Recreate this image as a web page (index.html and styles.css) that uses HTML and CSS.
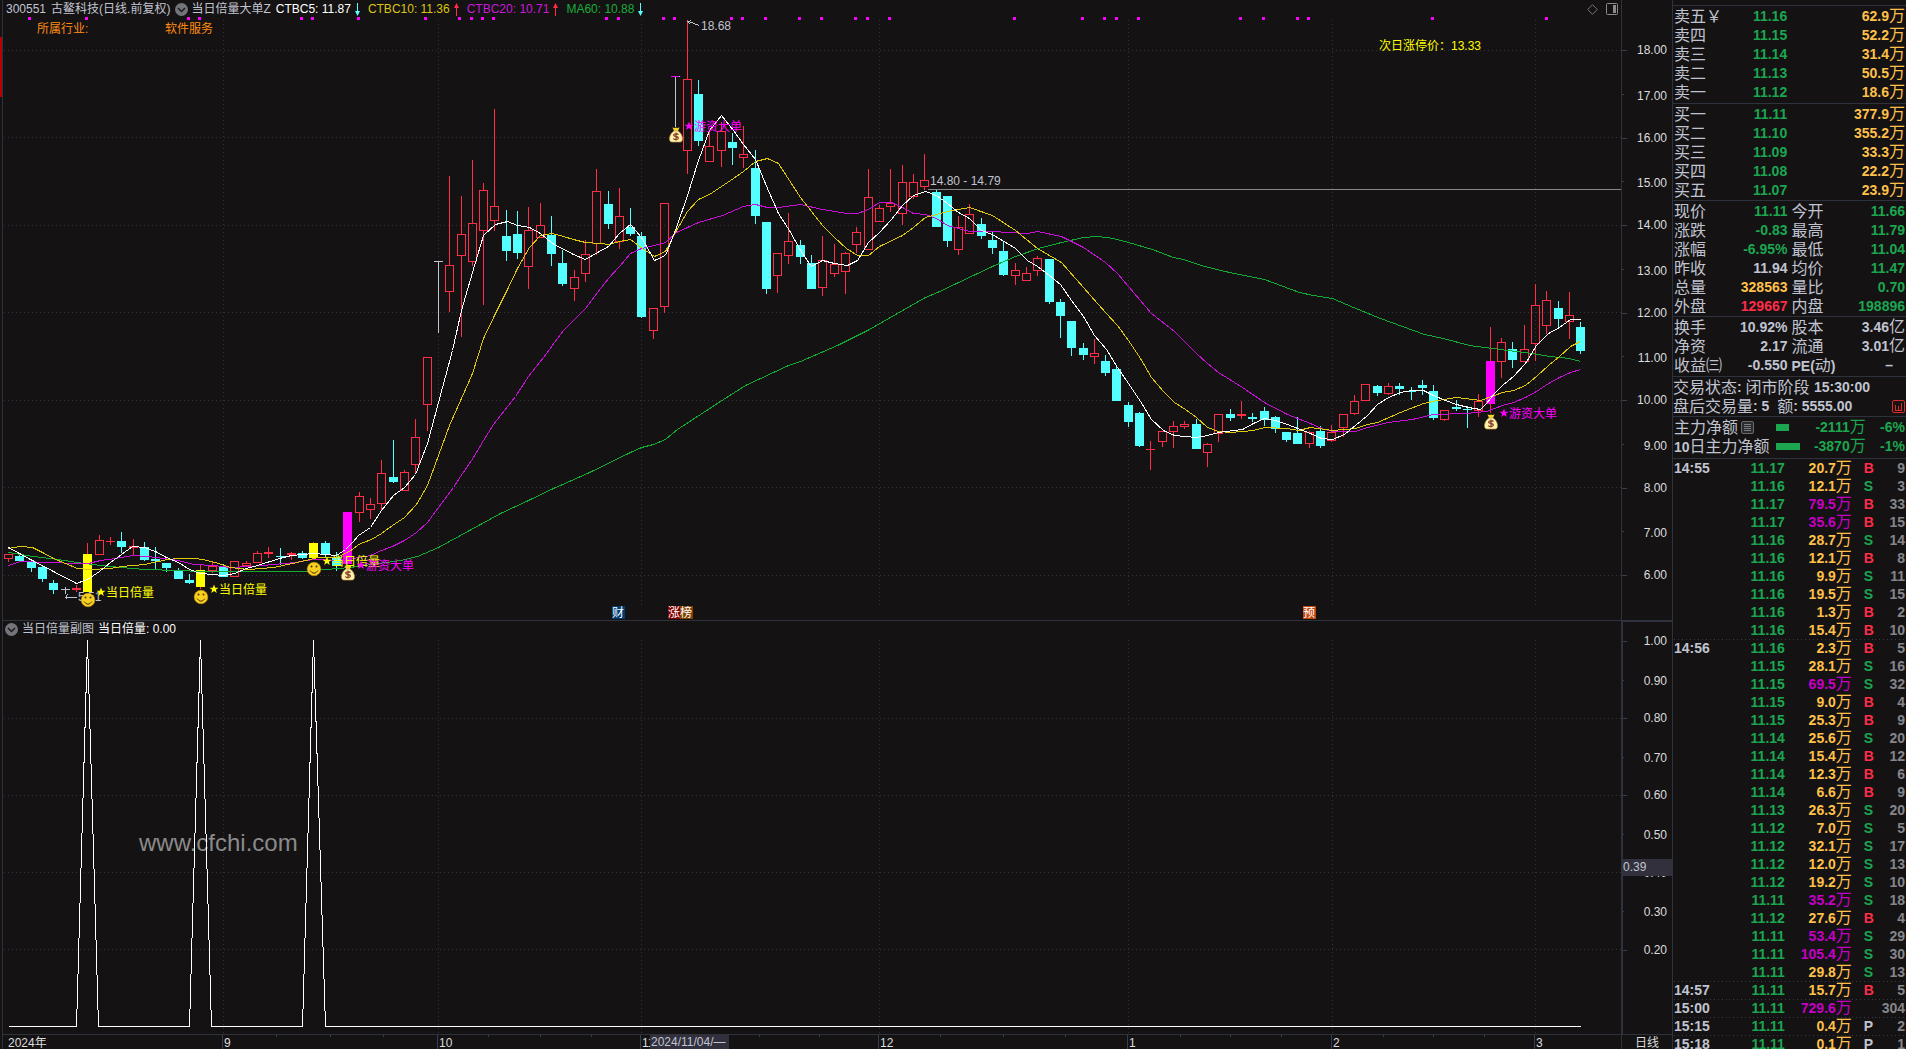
FILE: index.html
```html
<!DOCTYPE html>
<html lang="zh-CN">
<head>
<meta charset="utf-8">
<title>300551 古鳌科技</title>
<link rel="stylesheet" href="styles.css">
</head>
<body>
<div class="edge"><div class="edge-mark"></div></div>

<main class="charts">
  <section class="pane">
    <header class="pane-head">
      <span>300551</span>
      <span>古鳌科技(日线.前复权)</span>
      <button class="drop" type="button" aria-label="选择周期"><svg width="13" height="13" viewBox="0 0 13 13"><circle cx="6.500" cy="6.500" r="6.500" fill="#74757a"/><path d="M3 5l3.500 3.500L10 5" fill="none" stroke="#1b1a1c" stroke-width="1.500"/></svg></button>
      <span class="formula">当日倍量大单Z</span>
      <span class="ind white">CTBC5: 11.87<svg width="5" height="13"><path d="M2.500 0v9" stroke="#54ffff"/><path d="M0 8h5l-2.500 5z" fill="#54ffff"/></svg></span>
      <span class="ind gold">CTBC10: 11.36<svg width="5" height="13"><path d="M2.500 4v9" stroke="#ff2d48"/><path d="M0 5h5L2.500 0z" fill="#ff2d48"/></svg></span>
      <span class="ind violet">CTBC20: 10.71<svg width="5" height="13"><path d="M2.500 4v9" stroke="#ff2d48"/><path d="M0 5h5L2.500 0z" fill="#ff2d48"/></svg></span>
      <span class="ind leaf">MA60: 10.88<svg width="5" height="13"><path d="M2.500 0v9" stroke="#54ffff"/><path d="M0 8h5l-2.500 5z" fill="#54ffff"/></svg></span>
      <span class="tools">
        <button class="drop" type="button" aria-label="标记"><svg width="11" height="11" viewBox="0 0 11 11"><path d="M5.500 .7l4.800 4.800-4.800 4.800L.7 5.500z" fill="none" stroke="#777"/></svg></button>
        <button class="drop" type="button" aria-label="侧栏"><svg width="12" height="12" viewBox="0 0 12 12"><rect x=".5" y=".5" width="11" height="11" rx="1" fill="none" stroke="#8a8a8a"/><path d="M7 2h3v8H7z" fill="#8a8a8a"/></svg></button>
      </span>
    </header>
    <svg class="plot" id="price"></svg>
  </section>
  <div class="axis"><svg class="plot" id="price-axis"></svg></div>

  <section class="pane pane-sub">
    <header class="pane-head">
      <button class="drop" type="button" aria-label="选择指标"><svg width="13" height="13" viewBox="0 0 13 13"><circle cx="6.500" cy="6.500" r="6.500" fill="#74757a"/><path d="M3 5l3.500 3.500L10 5" fill="none" stroke="#1b1a1c" stroke-width="1.500"/></svg></button>
      <span>当日倍量副图</span>
      <span class="white">当日倍量: 0.00</span>
    </header>
    <svg class="plot" id="signal"></svg>
  </section>
  <div class="axis axis-sub"><svg class="plot" id="signal-axis"></svg></div>

  <div class="dates"><svg class="plot" id="dates"></svg></div>
  <div class="period">日线</div>
</main>

<aside class="quote">
  <table class="book">
    <colgroup><col class="c-side"><col class="c-price"><col></colgroup>
    <tbody>
      <tr><th>卖五￥</th><td class="g">11.16</td><td class="o">62.9<i>万</i></td></tr>
      <tr><th>卖四</th><td class="g">11.15</td><td class="o">52.2<i>万</i></td></tr>
      <tr><th>卖三</th><td class="g">11.14</td><td class="o">31.4<i>万</i></td></tr>
      <tr><th>卖二</th><td class="g">11.13</td><td class="o">50.5<i>万</i></td></tr>
      <tr><th>卖一</th><td class="g">11.12</td><td class="o">18.6<i>万</i></td></tr>
    </tbody>
  </table>
  <table class="book">
    <colgroup><col class="c-side"><col class="c-price"><col></colgroup>
    <tbody>
      <tr><th>买一</th><td class="g">11.11</td><td class="o">377.9<i>万</i></td></tr>
      <tr><th>买二</th><td class="g">11.10</td><td class="o">355.2<i>万</i></td></tr>
      <tr><th>买三</th><td class="g">11.09</td><td class="o">33.3<i>万</i></td></tr>
      <tr><th>买四</th><td class="g">11.08</td><td class="o">22.2<i>万</i></td></tr>
      <tr><th>买五</th><td class="g">11.07</td><td class="o">23.9<i>万</i></td></tr>
    </tbody>
  </table>
  <dl class="stats">
    <div><dt>现价</dt><dd class="g">11.11</dd></div><div><dt>今开</dt><dd class="g">11.66</dd></div>
    <div><dt>涨跌</dt><dd class="g">-0.83</dd></div><div><dt>最高</dt><dd class="g">11.79</dd></div>
    <div><dt>涨幅</dt><dd class="g">-6.95%</dd></div><div><dt>最低</dt><dd class="g">11.04</dd></div>
    <div><dt>昨收</dt><dd>11.94</dd></div><div><dt>均价</dt><dd class="g">11.47</dd></div>
    <div><dt>总量</dt><dd class="o">328563</dd></div><div><dt>量比</dt><dd class="g">0.70</dd></div>
    <div><dt>外盘</dt><dd class="r">129667</dd></div><div><dt>内盘</dt><dd class="g">198896</dd></div>
  </dl>
  <dl class="stats stats-pad">
    <div><dt>换手</dt><dd>10.92%</dd></div><div><dt>股本</dt><dd>3.46<i>亿</i></dd></div>
    <div><dt>净资</dt><dd>2.17</dd></div><div><dt>流通</dt><dd>3.01<i>亿</i></dd></div>
    <div><dt>收益㈢</dt><dd>-0.550</dd></div><div><dt><b>PE(</b>动<b>)</b></dt><dd class="none">–</dd></div>
  </dl>
  <div class="status">
    <p>交易状态<b>: </b>闭市阶段 <b>15:30:00</b></p>
    <p>盘后交易量<b>: 5  </b>额<b>: 5555.00</b>
      <button class="drop" type="button" aria-label="盘后明细"><svg width="13" height="13" viewBox="0 0 13 13"><rect x=".5" y=".5" width="12" height="12" rx="1.500" fill="none" stroke="#e02a2a"/><path d="M3.500 5v5M6.500 6v4M9.500 3v7M3 10.500h7" stroke="#e02a2a" fill="none"/></svg></button></p>
  </div>
  <table class="flow">
    <colgroup><col class="f-name"><col class="f-bar"><col class="f-sum"><col></colgroup>
    <tbody>
      <tr><th>主力净额<svg class="doc" width="13" height="13" viewBox="0 0 13 13"><rect x=".5" y=".5" width="12" height="12" rx="1.500" fill="#2c2b2e" stroke="#6a6b70"/><path d="M3 3.500h7M3 5.500h7M3 7.500h7M3 9.500h7" stroke="#7c7d82"/></svg></th><td><span class="bar" style="width:13px"></span></td><td class="g">-2111<i>万</i></td><td class="g">-6%</td></tr>
      <tr><th><b>10</b>日主力净额</th><td><span class="bar" style="width:24px"></span></td><td class="g">-3870<i>万</i></td><td class="g">-1%</td></tr>
    </tbody>
  </table>
  <table class="ticks">
    <colgroup><col class="t-time"><col class="t-price"><col class="t-sum"><col class="t-dir"><col></colgroup>
    <tbody id="ticks"></tbody>
  </table>
</aside>
<script src="app.js"></script>
</body>
</html>
```
FILE: styles.css
```css
:root {
  --bg: #141213;
  --line: #2e323d;
  --text: #c0c4d0;
  --green: #1ca650;
  --orange: #ffc04a;
  --red: #ff2d48;
  --cyan: #54ffff;
  --purple: #c400c4;
}
* { box-sizing: border-box; }
body {
  margin: 0;
  height: 100vh;
  display: flex;
  overflow: hidden;
  background: var(--bg);
  color: var(--text);
  font: 12px/14px "Liberation Sans", "Noto Sans CJK SC", sans-serif;
}
.edge { flex: 0 0 2px; padding-top: 37px; }
.edge-mark { height: 60px; background: #b40000; }
.charts {
  flex: 1;
  min-width: 0;
  border-left: 1px solid var(--line);
  display: grid;
  grid-template-columns: minmax(0, 1fr) 51px;
  grid-template-rows: minmax(0, 620fr) minmax(0, 414fr) 15px;
}
.pane { display: flex; flex-direction: column; min-width: 0; min-height: 0; }
.pane-sub { border-top: 1px solid var(--line); }
.pane-head {
  flex: 0 0 16px;
  height: 16px;
  padding: 2px 3px 0;
  display: flex;
  align-items: center;
  gap: 5px;
  white-space: nowrap;
}
.pane-sub .pane-head { padding: 0 2px; gap: 4px; }
.formula { margin-left: -2px; }
.ind { display: flex; align-items: center; gap: 4px; margin-right: 3px; }
.tools { margin-left: auto; display: flex; align-items: center; gap: 8px; }
.drop { border: 0; padding: 0; background: none; display: flex; cursor: pointer; }
.white { color: #fff; }
.gold { color: #dcc412; }
.violet { color: #c81ad8; }
.leaf { color: #18ac3a; }
.plot { display: block; flex: 1; width: 100%; height: 100%; min-height: 0; overflow: hidden; }
.axis { border-left: 1px solid var(--line); min-height: 0; }
.axis-sub { border-left-width: 2px; border-top: 2px solid var(--line); }
.dates { border-top: 1px solid var(--line); min-width: 0; min-height: 0; }
.period { border-top: 1px solid var(--line); border-left: 1px solid var(--line); padding-top: 1px; text-align: center; color: #ddd; }

svg .grid { stroke: #30333f; stroke-width: 1; stroke-dasharray: 1 3; fill: none; }
svg .tick { stroke: #3a3e4a; fill: none; }
svg .ref { stroke: #888; fill: none; }
svg .crisp { shape-rendering: crispEdges; }
svg .line { fill: none; stroke-width: 1; shape-rendering: crispEdges; }
svg .scale { fill: #dcdcdc; }
svg .note { fill: #c0c4d0; }
svg .mark { fill: #ffff00; }
svg .hot { fill: #ff00ff; }
svg .amber { fill: #ff8c10; }
svg .badge { fill: #fff; text-anchor: middle; }
svg .site { fill: #8a8a8a; font-size: 24px; }
svg .end { text-anchor: end; }
svg .cursor { fill: #31303c; }

.quote { flex: 0 0 234px; min-width: 0; border-left: 1px solid var(--line); padding-top: 5px; overflow: hidden; font-size: 14px; }
.quote > * { margin: 0; border-top: 1px solid var(--line); padding: 1px 1px 0; width: 100%; }
table { border-collapse: separate; border-spacing: 0; table-layout: fixed; }
.quote th, .quote dt, .status { font-size: 16px; font-weight: 400; text-align: left; white-space: nowrap; }
.quote th, .quote td { padding: 0; height: 19px; line-height: 19px; white-space: nowrap; }
.quote td, .quote dd { font-weight: 700; text-align: right; }
.quote i { font-size: 16px; font-style: normal; font-weight: 400; line-height: 1px; }
.quote b { font-size: 14px; line-height: 1px; }
.book:first-child { padding-bottom: 1px; }
.c-side { width: 20%; }
.c-price { width: 29%; }
.stats { display: grid; grid-template-columns: 1fr 1fr; column-gap: 4px; }
.stats div { display: flex; justify-content: space-between; height: 19px; line-height: 19px; }
.stats dd { margin: 0; }
.stats .none { padding-right: 12px; }
.stats-pad { padding-bottom: 1px; }
.quote .status { padding-left: 0; }
.status p { margin: 0; height: 19px; line-height: 19px; white-space: pre; display: flex; align-items: center; overflow: hidden; }
.status .drop { margin-left: auto; }
.flow { padding-bottom: 2px; }
.f-name { width: 44%; }
.f-bar { width: 11%; }
.f-sum { width: 28%; }
.doc { vertical-align: -1px; margin-left: 3px; }
.bar { display: block; height: 7px; background: var(--green); }
.quote .ticks { padding-top: 0; }
.ticks th, .ticks td { height: 18px; line-height: 18px; }
.ticks th { font-size: 14px; font-weight: 700; }
.ticks tr.cut > * { background: repeating-linear-gradient(90deg, #3a3b42 0 1px, transparent 1px 4px) top / 100% 1px no-repeat; }
.ticks .dir { text-align: left; padding-left: 12px; }
.t-time { width: 24%; }
.t-price { width: 24%; }
.t-sum { width: 29%; }
.t-dir { width: 10%; }
.g { color: var(--green); }
.o { color: var(--orange); }
.r { color: var(--red); }
.p { color: var(--purple); }
.n { color: #85858a; }
```
FILE: app.js
```js
// Chart space: x runs 3..1621 and y 0..1049; each plot maps its own slice to its box.
const COLORS = { r: '#ff2d48', c: '#54ffff', y: '#ffff00', m: '#ff00ff', g: '#c0c4d0' };

// kind, high, body top, body bottom, low
const CANDLES = `r554 554 559 562,c554 556 561 561,c562 562 568 572,c566 567 579 582,c580 583 590 594,g587 589 590 594,r585 588 590 592,y543 554 592 592,r535 540 555 555,r537 541 542 545,
c532 541 547 553,r539 546 548 555,c542 547 560 561,c547 559 561 569,c563 563 568 572,c568 571 579 579,c574 580 583 584,y565 570 587 589,r561 566 571 573,c564 566 577 577,
r561 561 577 577,r561 563 566 567,r551 553 563 563,r547 552 554 558,c548 556 557 565,r552 553 555 560,c551 553 558 559,y542 543 558 560,c541 543 554 558,c552 557 566 571,
m512 512 564 566,r492 496 513 522,r498 504 510 519,r460 473 504 510,c440 477 482 483,r470 472 491 491,r419 437 465 473,r357 357 405 431,g261 261 262 333,r176 265 292 312,
r196 234 256 337,r160 223 262 266,r183 190 231 305,r109 206 221 231,c210 236 251 261,c211 234 253 259,r207 230 267 289,r203 225 238 238,c216 235 254 266,c250 263 284 286,
r270 277 289 301,r240 254 274 282,r169 191 244 255,c191 204 224 229,r188 216 242 249,c208 227 234 236,c232 236 317 318,r308 308 331 339,r203 203 307 313,g76 76 77 127,
r20 79 151 174,c80 94 141 146,r130 146 162 162,r122 131 151 167,c133 142 148 165,r126 154 158 168,c150 168 216 224,c222 222 289 294,r253 253 276 293,r213 241 256 264,
c240 245 257 264,c255 263 289 289,r236 260 288 296,r244 264 274 277,r252 253 272 294,r227 232 245 253,r169 197 250 250,r205 208 222 222,r169 203 207 212,r165 182 214 225,
r174 182 197 199,r154 180 187 190,c190 192 227 227,c196 196 241 247,r216 227 250 255,r204 214 234 234,c218 224 236 239,c231 240 248 254,c242 251 275 276,r263 270 276 285,
r267 273 281 281,r256 258 271 276,c259 259 302 304,c299 302 316 338,c321 321 348 356,c343 348 355 360,r339 353 357 364,c355 361 373 376,c366 369 401 401,c402 405 422 427,
c412 413 446 447,r441 449 450 470,r431 431 442 447,r421 426 432 448,r421 424 427 429,c419 424 449 449,r443 444 453 467,r414 414 434 442,c409 414 418 421,r401 414 416 419,
c413 417 419 422,c407 411 420 426,c416 417 429 433,c432 432 440 442,c417 433 444 444,r431 432 444 448,c426 431 446 448,r425 432 441 442,r414 414 428 437,r395 401 414 415,
r384 384 401 401,c385 386 393 396,r383 386 394 395,c383 386 389 395,c387 391 392 400,c380 385 388 395,c385 391 418 420,r410 410 420 421,c400 407 409 411,c406 409 410 428,
r394 401 411 417,m327 361 404 413,r338 342 362 378,c342 349 360 368,r325 349 362 362,r284 305 344 361,r291 300 326 334,c301 308 319 328,r292 315 322 339,c322 327 351 354`;

const AVERAGES = [
  ['#12ac34', '8,552 33,556 57,559 77,562 100,565 120,567 144,569 178,570 200,571 267,571 303,571 325,569 350,567 371,564 400,560 417,556 438,547 480,524 500,513 528,500 553,488 587,473 630,452 641,447 653,444 665,439 677,429 723,399 745,385 788,365 800,361 837,345 867,330 925,297 937,292 992,266 1015,256 1038,248 1061,242 1083,237 1097,236 1113,238 1128,242 1152,249 1173,257 1183,259 1204,266 1229,272 1264,279 1299,292 1313,295 1332,298 1353,307 1380,318 1413,330 1424,334 1443,338 1469,345 1500,349 1531,353 1550,356 1569,358 1580,361'],
  ['#c810d8', '8,565 20,561 50,562 77,563 88,563 100,560 115,558 132,555 147,556 163,558 178,560 193,564 213,565 230,567 250,566 273,564 295,562 313,559 337,560 353,558 370,555 381,550 392,546 404,540 416,532 427,522 438,507 453,487 460,476 473,457 483,440 493,424 515,396 528,376 543,357 563,330 585,308 597,292 608,278 619,266 630,253 641,248 654,245 665,242 676,232 698,222 722,215 743,206 755,204 767,207 778,207 800,204 822,209 847,213 857,213 868,209 879,202 891,202 902,207 913,213 925,214 936,218 947,225 969,231 992,231 1027,233 1037,231 1061,236 1083,247 1105,262 1117,273 1128,286 1151,313 1174,331 1196,353 1207,363 1218,372 1242,387 1264,402 1287,414 1310,423 1321,428 1332,431 1355,431 1367,427 1388,422 1412,419 1433,414 1466,413 1486,411 1502,405 1513,402 1525,397 1536,391 1548,383 1559,377 1570,372 1580,369'],
  ['#e0c80c', '8,548 20,546 32,547 42,552 53,558 65,563 77,568 90,569 110,568 121,566 144,564 167,559 178,558 195,558 207,560 218,563 230,567 248,569 273,567 292,563 305,560 318,557 337,557 352,549 358,544 371,539 381,533 392,525 404,517 416,504 427,485 438,455 449,425 461,398 472,373 483,338 495,313 507,289 517,268 529,247 540,235 552,233 563,236 573,239 585,242 600,243 608,244 619,241 630,239 642,248 654,256 665,251 676,230 687,211 698,199 709,194 733,178 743,171 755,161 767,158 778,163 789,180 800,197 822,225 834,237 846,248 857,255 868,255 879,246 902,235 913,227 925,217 947,211 969,207 992,215 1015,230 1037,248 1061,262 1083,287 1105,312 1117,325 1128,340 1140,358 1151,377 1163,391 1174,402 1185,409 1196,417 1207,427 1218,431 1230,432 1253,430 1264,427 1287,428 1298,430 1310,427 1332,430 1355,428 1367,424 1377,422 1400,412 1423,403 1437,400 1456,397 1480,400 1494,395 1502,392 1513,390 1525,385 1536,376 1548,365 1559,356 1570,346 1580,341'],
  ['#ffffff', '8,547 19,553 30,559 53,571 76,583 87,579 99,571 110,562 121,554 132,546 144,547 155,551 166,557 178,562 189,569 200,573 212,574 223,575 234,573 246,568 257,565 279,558 291,555 313,553 325,554 336,555 345,549 352,542 358,535 370,527 381,510 393,495 404,487 415,474 427,443 438,402 452,350 461,310 472,272 483,235 495,224 507,221 517,225 529,227 540,233 552,243 573,254 585,259 597,252 608,246 619,233 630,224 641,237 654,260 665,255 676,227 687,195 698,160 709,130 721,115 733,130 743,144 755,159 767,188 778,213 789,230 800,250 811,266 822,260 834,263 847,265 857,260 868,242 879,232 891,219 902,205 913,195 925,191 936,195 947,203 958,212 969,218 981,230 992,234 1015,248 1027,260 1037,266 1049,275 1060,284 1071,300 1083,316 1094,335 1106,349 1117,367 1128,383 1140,401 1151,419 1163,430 1174,435 1196,437 1207,435 1218,432 1242,429 1253,423 1264,418 1275,420 1287,424 1310,433 1321,438 1332,439 1344,434 1355,425 1367,415 1377,404 1388,397 1400,392 1412,390 1423,390 1433,395 1445,400 1456,404 1468,407 1480,409 1486,403 1494,393 1502,385 1513,376 1525,363 1536,345 1548,333 1559,327 1570,319 1580,319']
];

const DOTS = [29, 86, 188, 199, 301, 312, 358, 425, 459, 471, 482, 493, 606, 618, 663, 674, 731, 742, 765, 799, 821, 855, 867, 889, 1014, 1082, 1104, 1116, 1138, 1240, 1263, 1297, 1308, 1432, 1546];
const MONTHS = [[223, '9'], [438, '10'], [641, '11'], [879, '12'], [1128, '1'], [1332, '2'], [1535, '3']];
const WEEKS = [276, 330, 383, 488, 540, 591, 699, 759, 819, 940, 1003, 1065, 1180, 1230, 1281, 1383, 1433, 1484];
const PRICE_GRID = [50, 137, 225, 312, 400, 487, 575];
const SIGNAL_GRID = [718, 795, 872, 949];

function surface(id, x0, x1, y0, y1) {
  const el = document.getElementById(id);
  const box = el.getBoundingClientRect();
  const X = v => Math.round((v - x0) * box.width / (x1 - x0));
  const Y = v => Math.round((v - y0) * box.height / (y1 - y0));
  const out = [];
  return {
    X, Y, add: s => out.push(s),
    text: (x, y, cls, s) => out.push(`<text x="${X(x)}" y="${Y(y) + 4}" class="${cls}">${s}</text>`),
    hline: (xa, xb, y, cls) => out.push(`<path d="M${X(xa)} ${Y(y) + .5}H${X(xb)}" class="${cls}"/>`),
    vline: (x, ya, yb, cls) => out.push(`<path d="M${X(x) + .5} ${Y(ya)}V${Y(yb)}" class="${cls}"/>`),
    rect: (x, y, w, h, fill) => out.push(`<rect x="${x}" y="${y}" width="${w}" height="${h}" fill="${fill}" class="crisp"/>`),
    poly: (pts, color) => out.push(`<polyline class="line" stroke="${color}" points="${pts.split(' ').map(p => { const [a, b] = p.split(','); return (X(+a) + .5) + ',' + (Y(+b) + .5); }).join(' ')}"/>`),
    done: () => { el.innerHTML = out.join(''); }
  };
}

function candle(s, i, spec) {
  const kind = spec[0];
  const [hi, top, bot, lo] = spec.slice(1).split(' ').map(s.Y);
  const x = s.X(Math.round(8.1 + 11.31 * i));
  const color = COLORS[kind];
  const wick = kind === 'm' || kind === 'y' ? COLORS.r : color;
  const hollow = kind === 'r' && bot - top > 2;
  if (hi < top) s.rect(x, hi, 1, top - hi, wick);
  if (lo > bot) s.rect(x, bot, 1, lo - bot, wick);
  if (hollow) s.add(`<rect x="${x - 3.5}" y="${top + .5}" width="8" height="${bot - top - 1}" fill="none" stroke="${color}" class="crisp"/>`);
  else s.rect(x - 4, top, 9, Math.max(1, bot - top), color);
}

function star(s, x, y, cls) {
  s.add(`<path transform="translate(${s.X(x)} ${s.Y(y)})" class="${cls}" d="M0-4.500L1.200-1.300H4.500L1.900.7 2.800 4 0 2-2.800 4-1.900.7-4.500-1.300H-1.200z"/>`);
}
function smile(s, x, y) {
  s.add(`<g transform="translate(${s.X(x)} ${s.Y(y)})"><circle r="6.800" fill="#f8d020" stroke="#c89410" stroke-width=".6"/><circle cx="-2.500" cy="-2.500" r="1" fill="#50320a"/><circle cx="2.500" cy="-2.500" r="1" fill="#50320a"/><path d="M-4 1.500Q0 7 4 1.500" fill="none" stroke="#50320a"/></g>`);
}
function bag(s, x, y) {
  s.add(`<g transform="translate(${s.X(x)} ${s.Y(y)})"><path d="M-3.500-7.500L-1-7 0-7.500 1-7 3.500-7.500 2-4H-2z" fill="#f4d428"/><path d="M-2-4H2C7-1 8 7 4 7H-4C-8 7-7-1-2-4z" fill="#fff4a8" stroke="#c09a50" stroke-width=".7"/><path d="M2.500-.3C1.500-1.700-2.500-1.500-2.300.3-2 2 2.400 1 2.400 3 2.300 5-2 5-2.700 3.500M0-2.500V5.500" fill="none" stroke="#8a4030" stroke-width="1.300"/></g>`);
}

function drawPrice() {
  const s = surface('price', 3, 1621, 16, 620);
  PRICE_GRID.forEach(y => s.hline(4, 1621, y, 'grid'));
  MONTHS.forEach(m => s.vline(m[0], 20, 606, 'grid'));
  DOTS.forEach(x => s.rect(s.X(x) - 1, s.Y(17), 3, 3, '#ff00ff'));
  s.text(37, 29, 'amber', '所属行业:');
  s.text(165, 29, 'amber', '软件服务');
  s.text(1379, 46, 'mark', '次日涨停价：13.33');
  s.hline(928, 1621, 189, 'ref');
  CANDLES.replace(/\n/g, '').split(',').forEach((c, i) => candle(s, i, c));
  s.rect(s.X(675) - 4, s.Y(76), 8, 1, '#ff00ff');
  AVERAGES.forEach(a => s.poly(a[1], a[0]));
  s.poly('699,25 688,21 691,20', '#c0c4d0');
  s.poly('688,21 689,24', '#c0c4d0');
  s.text(701, 26, 'note', '18.68');
  s.text(930, 181, 'note', '14.80 - 14.79');
  s.poly('76,597 65,597 67,594', '#c0c4d0');
  s.poly('65,597 67,599', '#c0c4d0');
  s.text(78, 597, 'note', '5.51');
  [[101, 592], [214, 589], [327, 561]].forEach(([x, y]) => { star(s, x, y, 'mark'); s.text(x + 5, y + 1, 'mark', '当日倍量'); });
  [[361, 565], [689, 126], [1504, 413]].forEach(([x, y]) => { star(s, x, y, 'hot'); s.text(x + 5, y + 1, 'hot', '游资大单'); });
  [[88, 600], [201, 597], [314, 569]].forEach(p => smile(s, ...p));
  [[348, 573], [676, 135], [1491, 422]].forEach(p => bag(s, ...p));
  [[612, '财', '#003a70'], [668, '涨', '#800000'], [680, '榜', '#804000'], [1303, '预', '#c04810']].forEach(([x, t, f]) => {
    s.rect(s.X(x), s.Y(606), 13, 13, f);
    s.text(x + 6, 613, 'badge', t);
  });
  s.done();
}

function drawPriceAxis() {
  const s = surface('price-axis', 0, 50, 0, 620);
  for (let p = 18; p >= 6; p--) {
    const y = 50 + (18 - p) * 43.75;
    const major = p % 2 === 0;
    s.hline(0, major ? 5 : 2, y, 'tick');
    s.text(45, major ? y : y + 2, 'scale end', p.toFixed(2));
  }
  s.done();
}

function drawSignal() {
  const s = surface('signal', 3, 1621, 637, 1034);
  SIGNAL_GRID.forEach(y => s.hline(4, 1621, y, 'grid'));
  MONTHS.forEach(m => s.vline(m[0], 640, 1034, 'grid'));
  s.text(139, 847, 'site', 'www.cfchi.com');
  s.poly('8,1026 76,1026 87,640 98,1026 189,1026 200,640 211,1026 302,1026 313,640 325,1026 1580,1026', '#ffffff');
  s.done();
}

function drawSignalAxis() {
  const s = surface('signal-axis', 0, 49, 622, 1034);
  for (let k = 10; k >= 2; k--) {
    const y = 641 + (10 - k) * 38.6;
    const major = k % 2 === 0;
    s.hline(0, major ? 4 : 1, y, 'tick');
    s.text(44, major ? y : y + 1, 'scale end', (k / 10).toFixed(2));
  }
  s.add(`<rect x="0" y="${s.Y(859)}" width="49" height="17" class="cursor"/>`);
  s.text(0, 867, 'note', '0.39');
  s.done();
}

function drawDates() {
  const s = surface('dates', 3, 1621, 1035, 1049);
  s.text(8, 1043, 'scale', '2024年');
  MONTHS.forEach(([x, t]) => { s.vline(x - 1, 1035, 1049, 'tick'); s.text(x + 1, 1043, 'scale', t); });
  WEEKS.forEach(x => s.vline(x, 1035, 1037, 'tick'));
  s.add(`<rect x="${s.X(650)}" y="0" width="79" height="14" class="cursor"/>`);
  s.text(651, 1042, 'note', '2024/11/04/—');
  s.done();
}

// time | price | amount | direction | lots
const TICKS = `14:55|11.17|20.7|B|9
|11.16|12.1|S|3
|11.17|79.5|B|33
|11.17|35.6|B|15
|11.16|28.7|S|14
|11.16|12.1|B|8
|11.16|9.9|S|11
|11.16|19.5|S|15
|11.16|1.3|B|2
|11.16|15.4|B|10
14:56|11.16|2.3|B|5
|11.15|28.1|S|16
|11.15|69.5|S|32
|11.15|9.0|B|4
|11.15|25.3|B|9
|11.14|25.6|S|20
|11.14|15.4|B|12
|11.14|12.3|B|6
|11.14|6.6|B|9
|11.13|26.3|S|20
|11.12|7.0|S|5
|11.12|32.1|S|17
|11.12|12.0|S|13
|11.12|19.2|S|10
|11.11|35.2|S|18
|11.12|27.6|B|4
|11.11|53.4|S|29
|11.11|105.4|S|30
|11.11|29.8|S|13
14:57|11.11|15.7|B|5
15:00|11.11|729.6||304
15:15|11.11|0.4|P|2
15:18|11.11|0.1|P|1`;

document.getElementById('ticks').innerHTML = TICKS.split('\n').map((line, i) => {
  const [time, price, sum, dir, lots] = line.split('|');
  const cut = time && i ? ' class="cut"' : '';
  const big = +sum >= 33 ? 'p' : 'o';
  const side = dir === 'B' ? 'r' : dir === 'S' ? 'g' : '';
  return `<tr${cut}><th>${time}</th><td class="g">${price}</td><td class="${big}">${sum}<i>万</i></td><td class="dir ${side}">${dir}</td><td class="n">${lots}</td></tr>`;
}).join('');

function drawAll() {
  drawPrice();
  drawPriceAxis();
  drawSignal();
  drawSignalAxis();
  drawDates();
}
drawAll();
window.addEventListener('resize', drawAll);
```
